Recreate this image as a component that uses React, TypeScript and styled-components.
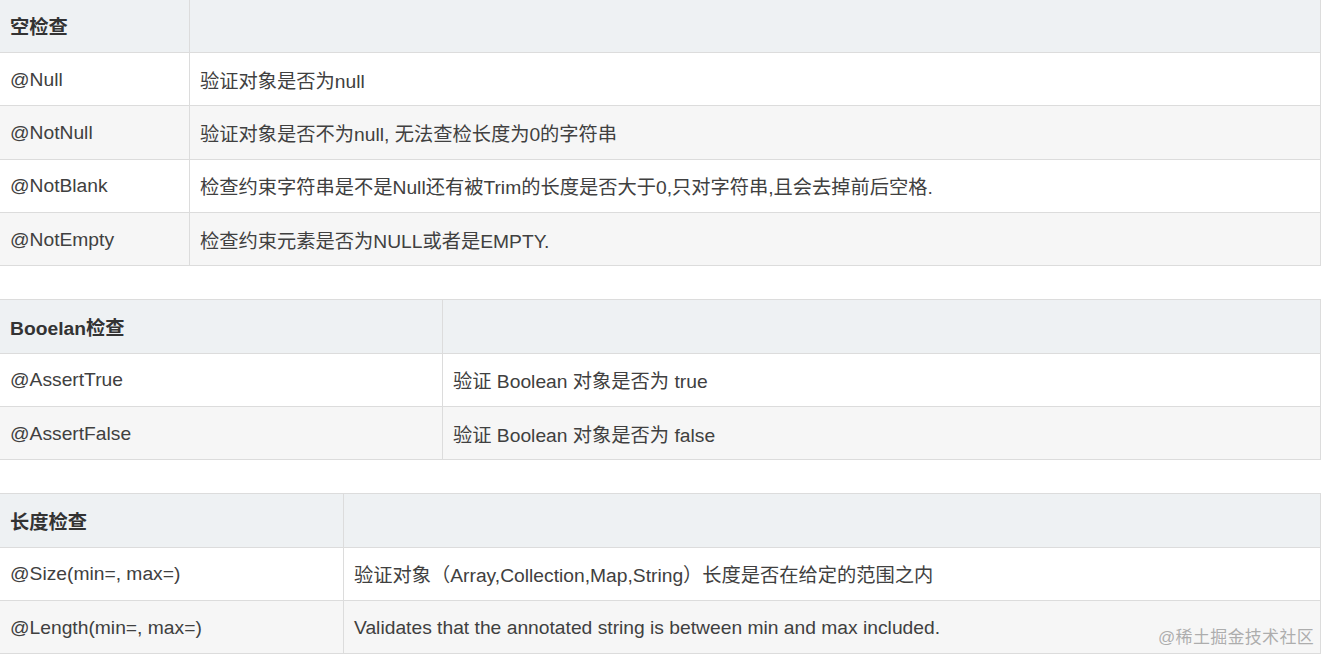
import styled, { createGlobalStyle } from "styled-components";

const GlobalStyle = createGlobalStyle`
  html, body {
    margin: 0;
    padding: 0;
    background: #fff;
  }
  body {
    font-family: "Liberation Sans", Arial, "Noto Sans CJK SC", sans-serif;
    color: #333;
    overflow: hidden;
  }
`;

const Page = styled.div`
  position: relative;
  width: 1323px;
  height: 657px;
  overflow: hidden;
`;

const Stack = styled.div`
  display: flex;
  flex-direction: column;
  gap: 33px;
  margin-top: -1.33px;
  margin-left: -1px;
  width: 1322px;
`;

const Table = styled.div<{ $first: number }>`
  display: grid;
  grid-template-columns: ${(p) => p.$first + 1}px 1fr;
  border-top: 1px solid #dcdcdc;
  border-right: 1px solid #dcdcdc;
`;

const Cell = styled.div<{ $head?: boolean; $shade?: boolean }>`
  box-sizing: border-box;
  height: 53.33px;
  display: flex;
  align-items: center;
  padding: 1px 10px 0;
  border-left: 1px solid #dcdcdc;
  border-bottom: 1px solid #dcdcdc;
  font-size: 19.25px;
  white-space: nowrap;
  color: ${(p) => (p.$head ? "#333" : "#404040")};
  font-weight: ${(p) => (p.$head ? 700 : 400)};
  background: ${(p) => (p.$head ? "#eef1f3" : p.$shade ? "#f6f6f6" : "#fff")};
`;

const Watermark = styled.div`
  position: absolute;
  right: 9px;
  bottom: 9px;
  font-size: 17px;
  color: rgba(160, 160, 160, 0.85);
  letter-spacing: 0.3px;
`;

type Row = [string, string];

const tables: { title: string; first: number; rows: Row[] }[] = [
  {
    title: "空检查",
    first: 189,
    rows: [
      ["@Null", "验证对象是否为null"],
      ["@NotNull", "验证对象是否不为null, 无法查检长度为0的字符串"],
      [
        "@NotBlank",
        "检查约束字符串是不是Null还有被Trim的长度是否大于0,只对字符串,且会去掉前后空格.",
      ],
      ["@NotEmpty", "检查约束元素是否为NULL或者是EMPTY."],
    ],
  },
  {
    title: "Booelan检查",
    first: 442,
    rows: [
      ["@AssertTrue", "验证 Boolean 对象是否为 true"],
      ["@AssertFalse", "验证 Boolean 对象是否为 false"],
    ],
  },
  {
    title: "长度检查",
    first: 343,
    rows: [
      [
        "@Size(min=, max=)",
        "验证对象（Array,Collection,Map,String）长度是否在给定的范围之内",
      ],
      [
        "@Length(min=, max=)",
        "Validates that the annotated string is between min and max included.",
      ],
    ],
  },
];

export default function App() {
  return (
    <Page>
      <GlobalStyle />
      <Stack>
        {tables.map((t) => (
          <Table key={t.title} $first={t.first}>
            <Cell $head>{t.title}</Cell>
            <Cell $head />
            {t.rows.map(([name, desc], i) => (
              <>
                <Cell key={name} $shade={i % 2 === 1}>
                  {name}
                </Cell>
                <Cell key={name + "-d"} $shade={i % 2 === 1}>
                  {desc}
                </Cell>
              </>
            ))}
          </Table>
        ))}
      </Stack>
      <Watermark>@稀土掘金技术社区</Watermark>
    </Page>
  );
}
